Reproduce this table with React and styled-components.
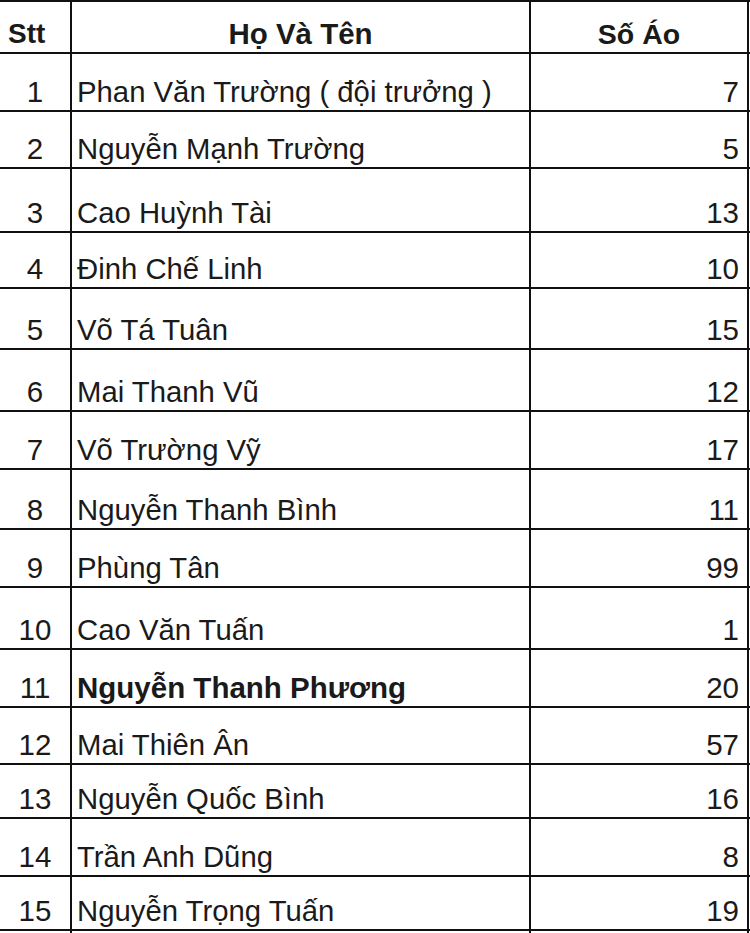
import React from "react";
import styled, { createGlobalStyle } from "styled-components";

const Global = createGlobalStyle`
  html, body { margin: 0; padding: 0; background: #fff; overflow: hidden; }
  body { font-family: "Liberation Sans", Arial, sans-serif; color: #1a1a1a; }
`;

const Sheet = styled.div`
  width: 750px;
  border-top: 2px solid #111;
`;

const Row = styled.div`
  display: grid;
  grid-template-columns: 72px 459px 218px;
  height: ${(p) => p.$h}px;
  border-bottom: 2px solid #111;
  box-sizing: border-box;
`;

const Cell = styled.div`
  box-sizing: border-box;
  border-right: 2px solid #111;
  display: flex;
  align-items: flex-end;
  justify-content: ${(p) => p.$align || "flex-start"};
  padding: 0 ${(p) => p.$pr ?? 0}px 4px ${(p) => p.$pl ?? 0}px;
  font-size: ${(p) => p.$size || 29.5}px;
  line-height: 28px;
  font-weight: ${(p) => (p.$bold ? 700 : 400)};
  white-space: nowrap;
  overflow: hidden;
`;

const rows = [
  [1, "Phan Văn Trường ( đội trưởng )", 7, 58],
  [2, "Nguyễn Mạnh Trường", 5, 57],
  [3, "Cao Huỳnh Tài", 13, 64],
  [4, "Đinh Chế Linh", 10, 56],
  [5, "Võ Tá Tuân", 15, 61],
  [6, "Mai Thanh Vũ", 12, 62],
  [7, "Võ Trường Vỹ", 17, 58],
  [8, "Nguyễn Thanh Bình", 11, 60],
  [9, "Phùng Tân", 99, 58],
  [10, "Cao Văn Tuấn", 1, 62],
  [11, "Nguyễn Thanh Phương", 20, 58, true],
  [12, "Mai Thiên Ân", 57, 57],
  [13, "Nguyễn Quốc Bình", 16, 54],
  [14, "Trần Anh Dũng", 8, 58],
  [15, "Nguyễn Trọng Tuấn", 19, 54],
];

export default function App() {
  return (
    <>
      <Global />
      <Sheet>
        <Row $h={52}>
          <Cell $bold $pl={8} $size={28}>Stt</Cell>
          <Cell $bold $align="center">Họ Và Tên</Cell>
          <Cell $bold $align="center" $size={28.5}>Số Áo</Cell>
        </Row>
        {rows.map(([n, name, num, h, bold]) => (
          <Row key={n} $h={h}>
            <Cell $align="center">{n}</Cell>
            <Cell $pl={5} $bold={bold} $size={bold ? 29.5 : 29.3}>{name}</Cell>
            <Cell $align="flex-end" $pr={8}>{num}</Cell>
          </Row>
        ))}
        <Row $h={58}>
          <Cell />
          <Cell />
          <Cell />
        </Row>
      </Sheet>
    </>
  );
}
